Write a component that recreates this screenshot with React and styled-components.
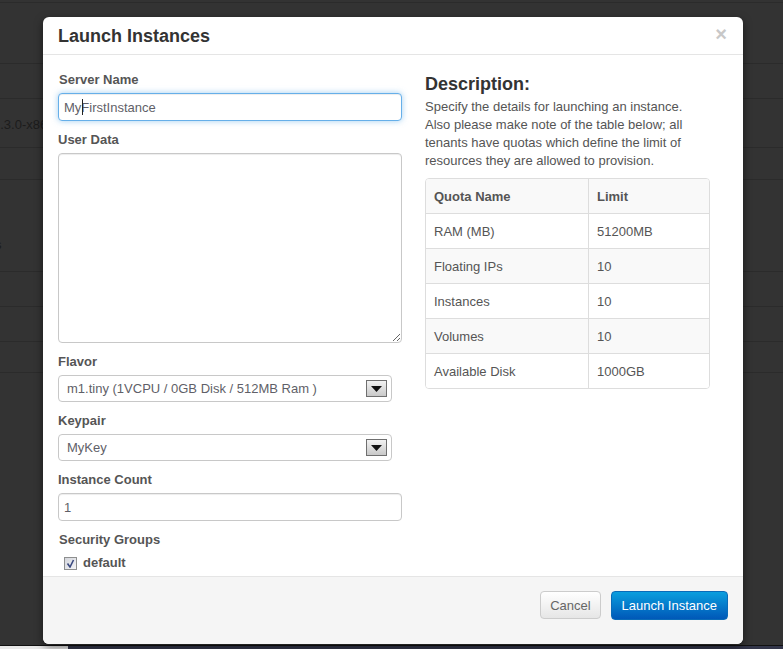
import React from "react";
import styled, { createGlobalStyle } from "styled-components";

const Global = createGlobalStyle`
  html, body {
    margin: 0;
    padding: 0;
    height: 649px;
    overflow: hidden;
    background: #333333;
    font-family: "Liberation Sans", Arial, sans-serif;
    font-size: 13px;
    color: #555555;
  }
  * { box-sizing: border-box; }
`;

const Pagina = styled.div`
  position: relative;
  width: 783px;
  height: 649px;
  overflow: hidden;
  background: #333333;
`;

const FilaFondo = styled.div`
  height: ${(p) => p.$alto}px;
  padding-top: ${(p) => p.$arriba || 0}px;
  border-bottom: 1px solid #2b2b2b;
  color: #1c1c1c;
  font-size: 13px;
  display: flex;
  align-items: center;
  overflow: hidden;
`;

const TextoFondo = styled.span`
  margin-left: ${(p) => p.$izq}px;
  white-space: nowrap;
`;

const PieFondo = styled.div`
  position: absolute;
  left: 0;
  right: 0;
  bottom: 0;
  height: 4px;
  border-top: 1px solid #111111;
  background: linear-gradient(90deg, #e8e8e8 0 68px, #33364a 68px 100%);
`;

const Modal = styled.div`
  position: absolute;
  left: 43px;
  top: 17px;
  width: 700px;
  height: 627px;
  display: flex;
  flex-direction: column;
  background: #ffffff;
  border-radius: 6px;
  overflow: hidden;
  box-shadow: 0 3px 9px rgba(0, 0, 0, 0.5);
`;

const ModalHeader = styled.div`
  height: 38px;
  flex: none;
  border-bottom: 1px solid #e5e5e5;
  display: flex;
  align-items: center;
  justify-content: space-between;
  padding: 0 16px 0 15px;
`;

const Titulo = styled.h3`
  margin: 0;
  font-size: 18px;
  line-height: 36px;
  font-weight: bold;
  color: #333333;
`;

const Cerrar = styled.span`
  margin-bottom: 3px;
  font-size: 20px;
  font-weight: bold;
  line-height: 20px;
  color: #c8c8c8;
`;

const ModalBody = styled.div`
  flex: 1;
  display: flex;
  gap: 23px;
  padding: 16px 33px 0 15px;
  overflow: hidden;
`;

const Formulario = styled.div`
  width: 344px;
  flex: none;
`;

const Etiqueta = styled.label`
  display: block;
  font-size: 13px;
  line-height: 18px;
  font-weight: bold;
  color: #555555;
  margin-left: ${(p) => p.$izq || 0}px;
  margin-bottom: 4px;
`;

const CampoEntrada = styled.div`
  position: relative;
  width: 344px;
  margin-bottom: 10px;
`;

const Entrada = styled.input`
  display: block;
  width: 100%;
  height: 28px;
  padding: 0 5px;
  border: 1px solid ${(p) => (p.$foco ? "#66afe9" : "#c8c8c8")};
  border-radius: 4px;
  outline: none;
  background: #ffffff;
  font-family: inherit;
  font-size: 13px;
  color: #5f5f68;
  box-shadow: ${(p) =>
    p.$foco
      ? "inset 0 1px 1px rgba(0,0,0,.075), 0 0 6px rgba(102,175,233,.6)"
      : "inset 0 1px 1px rgba(0,0,0,.075)"};
`;

const Cursor = styled.span`
  position: absolute;
  left: 24px;
  top: 6px;
  width: 1px;
  height: 16px;
  background: #222222;
`;

const AreaTexto = styled.textarea`
  display: block;
  width: 344px;
  height: 190px;
  margin-bottom: 10px;
  border: 1px solid #c8c8c8;
  border-radius: 4px;
  outline: none;
  resize: vertical;
  box-shadow: inset 0 1px 1px rgba(0, 0, 0, 0.075);
`;

const Selector = styled.div`
  width: 334px;
  height: 27px;
  margin-bottom: 10px;
  padding: 0 4px 0 8px;
  display: flex;
  align-items: center;
  justify-content: space-between;
  border: 1px solid #c8c8c8;
  border-radius: 4px;
  color: #5f5f68;
  font-size: 13px;
`;

const FlechaSelector = styled.span`
  width: 21px;
  height: 17px;
  display: flex;
  align-items: center;
  justify-content: center;
  border: 1px solid #6f6f6f;
  background: linear-gradient(#f2f2f2, #c9c9c9);
`;

const GrupoCheck = styled.div`
  display: flex;
  align-items: center;
  gap: 6px;
  margin: 5px 0 0 6px;
  font-weight: bold;
  font-size: 13px;
  line-height: 18px;
  color: #555555;
`;

const Check = styled.span`
  width: 13px;
  height: 13px;
  display: flex;
  align-items: center;
  justify-content: center;
  border: 1px solid #8e8f8f;
  background: linear-gradient(135deg, #d4d6dc, #f4f4f6);
`;

const Columna = styled.div`
  width: 285px;
  flex: none;
`;

const Subtitulo = styled.h3`
  margin: 2px 0 3px;
  font-size: 18px;
  line-height: 22px;
  font-weight: bold;
  color: #333333;
`;

const Parrafo = styled.p`
  margin: 0 0 8px;
  font-size: 13px;
  line-height: 18px;
  color: #555555;
`;

const TablaCuotas = styled.div`
  border: 1px solid #dddddd;
  border-radius: 4px;
  overflow: hidden;
`;

const FilaCuota = styled.div`
  display: grid;
  grid-template-columns: 162px 1fr;
  height: ${(p) => (p.$encabezado ? 34 : 35)}px;
  background: ${(p) => (p.$gris ? "#f9f9f9" : "#ffffff")};
  border-top: ${(p) => (p.$encabezado ? "none" : "1px solid #dddddd")};
  font-weight: ${(p) => (p.$encabezado ? "bold" : "normal")};
`;

const CeldaCuota = styled.div`
  display: flex;
  align-items: center;
  padding: 0 8px;
  & + & {
    border-left: 1px solid #dddddd;
  }
`;

const ModalFooter = styled.div`
  height: 68px;
  flex: none;
  display: flex;
  justify-content: flex-end;
  align-items: flex-start;
  gap: 10px;
  padding: 14px 15px 0;
  background: #f5f5f5;
  border-top: 1px solid #e5e5e5;
`;

const Boton = styled.button`
  height: ${(p) => (p.$primario ? 29 : 28)}px;
  padding: 0 ${(p) => (p.$primario ? 10 : 9)}px;
  border-radius: 4px;
  border: 1px solid ${(p) => (p.$primario ? "#0a6bb8" : "#cccccc")};
  font-family: inherit;
  font-size: 13px;
  color: ${(p) => (p.$primario ? "#ffffff" : "#666666")};
  background: ${(p) =>
    p.$primario
      ? "linear-gradient(#0a9ede, #0058b8)"
      : "linear-gradient(#ffffff, #e6e6e6)"};
`;

const filasFondo = [
  { alto: 3 },
  { alto: 61 },
  { alto: 35 },
  { alto: 49, texto: "1.3.0-x86", izq: -7, arriba: 3 },
  { alto: 32 },
  { alto: 92, texto: "s", izq: -5, arriba: 38 },
  { alto: 35 },
  { alto: 35 },
  { alto: 31 },
];

const cuotas = [
  ["RAM (MB)", "51200MB"],
  ["Floating IPs", "10"],
  ["Instances", "10"],
  ["Volumes", "10"],
  ["Available Disk", "1000GB"],
];

const Flecha = () => (
  <FlechaSelector>
    <svg width="11" height="6" viewBox="0 0 11 6">
      <path d="M0 0h11L5.5 6z" fill="#111111" />
    </svg>
  </FlechaSelector>
);

const App = () => {
  return (
    <>
      <Global />
      <Pagina>
        {filasFondo.map((fila, i) => (
          <FilaFondo key={i} $alto={fila.alto} $arriba={fila.arriba}>
            {fila.texto && <TextoFondo $izq={fila.izq}>{fila.texto}</TextoFondo>}
          </FilaFondo>
        ))}
        <PieFondo />

        <Modal>
          <ModalHeader>
            <Titulo>Launch Instances</Titulo>
            <Cerrar>×</Cerrar>
          </ModalHeader>

          <ModalBody>
            <Formulario>
              <Etiqueta $izq={1}>Server Name</Etiqueta>
              <CampoEntrada>
                <Entrada $foco defaultValue="MyFirstInstance" />
                <Cursor />
              </CampoEntrada>
              <Etiqueta>User Data</Etiqueta>
              <AreaTexto />
              <Etiqueta>Flavor</Etiqueta>
              <Selector>
                m1.tiny (1VCPU / 0GB Disk / 512MB Ram )
                <Flecha />
              </Selector>
              <Etiqueta>Keypair</Etiqueta>
              <Selector>
                MyKey
                <Flecha />
              </Selector>
              <Etiqueta>Instance Count</Etiqueta>
              <CampoEntrada>
                <Entrada defaultValue="1" />
              </CampoEntrada>
              <Etiqueta $izq={1}>Security Groups</Etiqueta>
              <GrupoCheck>
                <Check>
                  <svg width="9" height="9" viewBox="0 0 9 9">
                    <path d="M1.5 4.5 4 8l3.5-7" fill="none" stroke="#3b4a80" strokeWidth="1.6" />
                  </svg>
                </Check>
                default
              </GrupoCheck>
            </Formulario>

            <Columna>
              <Subtitulo>Description:</Subtitulo>
              <Parrafo>
                Specify the details for launching an instance.
                <br />
                Also please make note of the table below; all
                <br />
                tenants have quotas which define the limit of
                <br />
                resources they are allowed to provision.
              </Parrafo>
              <TablaCuotas>
                <FilaCuota $encabezado $gris>
                  <CeldaCuota>Quota Name</CeldaCuota>
                  <CeldaCuota>Limit</CeldaCuota>
                </FilaCuota>
                {cuotas.map(([nombre, limite], i) => (
                  <FilaCuota key={nombre} $gris={i % 2 === 1}>
                    <CeldaCuota>{nombre}</CeldaCuota>
                    <CeldaCuota>{limite}</CeldaCuota>
                  </FilaCuota>
                ))}
              </TablaCuotas>
            </Columna>
          </ModalBody>

          <ModalFooter>
            <Boton>Cancel</Boton>
            <Boton $primario>Launch Instance</Boton>
          </ModalFooter>
        </Modal>
      </Pagina>
    </>
  );
};

export default App;
